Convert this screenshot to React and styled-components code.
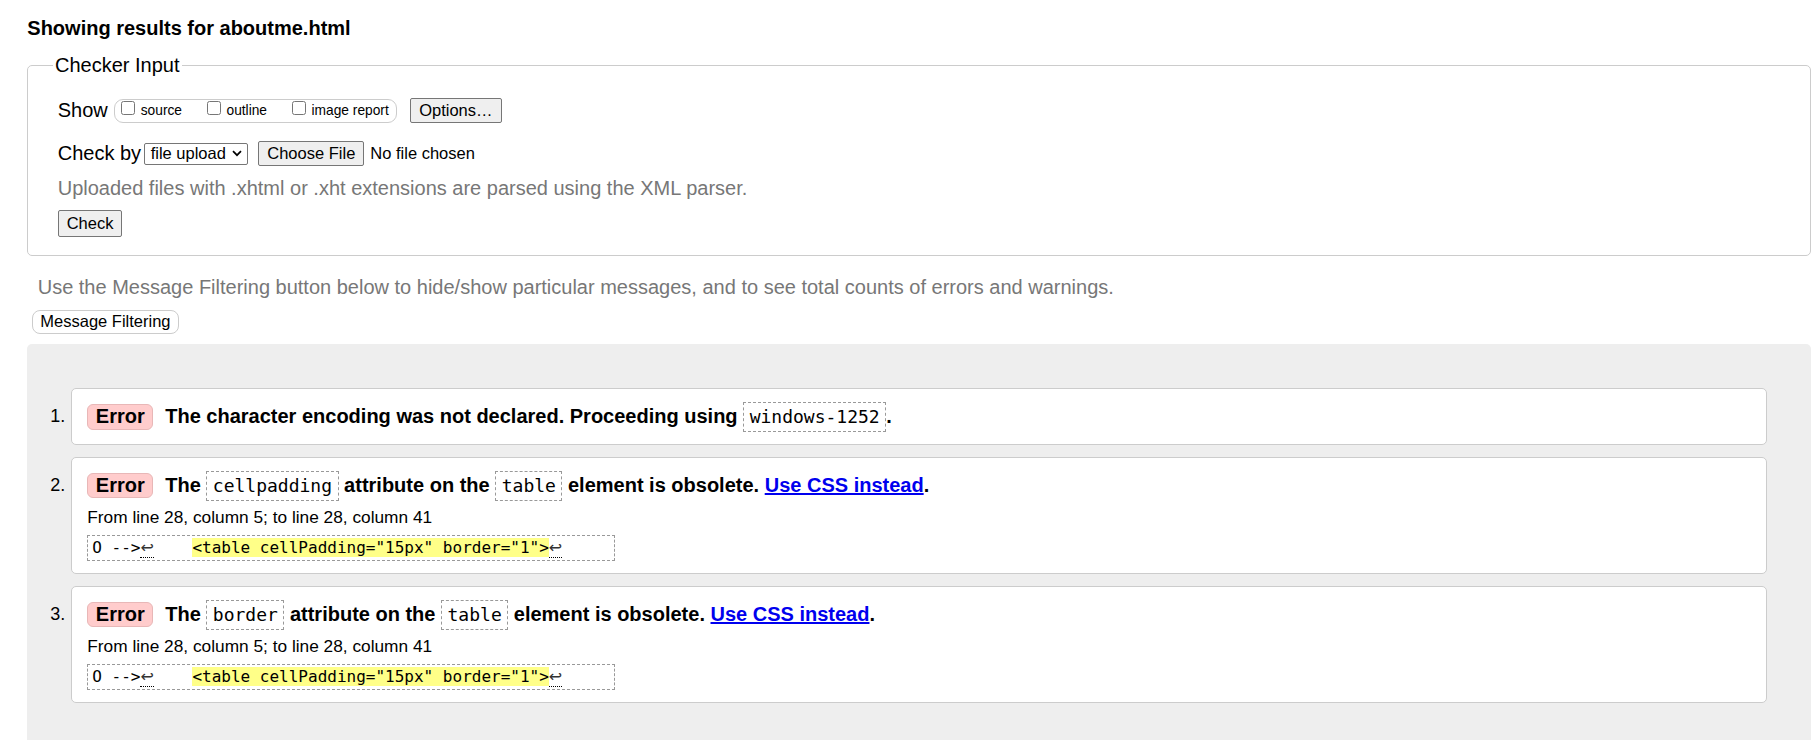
import React from "react";
import styled, { createGlobalStyle } from "styled-components";

const GlobalStyle = createGlobalStyle`
  html, body {
    margin: 0;
    padding: 0;
    background: #fff;
  }
  body {
    font-family: "Liberation Sans", Arial, sans-serif;
    color: #000;
  }
`;

const Page = styled.main`
  padding: 16.6px 8px 0 27.3px;
  font-size: 20px;
  line-height: 23px;
`;

const Title = styled.h2`
  margin: 0 0 14.6px;
  font-size: 20px;
  line-height: 23px;
  font-weight: bold;
`;

const Fieldset = styled.fieldset`
  margin: 0;
  padding: 21px 8px 18px 29.4px;
  border: 1px solid #ccc;
  border-radius: 5px;
  min-width: 0;
`;

const Legend = styled.legend`
  padding: 0 2px;
  margin-left: -4.7px;
  font-size: 20px;
  line-height: 23px;
`;

const Row = styled.div`
  display: flex;
  align-items: center;
  margin-top: ${(p) => p.$gap || 0}px;
`;

const Label = styled.span`
  font-size: 20px;
  line-height: 23px;
`;

const ShowBox = styled.div`
  display: flex;
  align-items: center;
  gap: 25px;
  box-sizing: border-box;
  height: 24px;
  margin-left: 6px;
  padding: 0 7px 0 6.5px;
  border: 1px solid #ccc;
  border-radius: 9px;
  font-size: 13.75px;
  line-height: 16px;
`;

const Option = styled.label`
  display: inline-flex;
  align-items: center;
  gap: 5.5px;
`;

const Checkbox = styled.input.attrs({ type: "checkbox" })`
  appearance: none;
  box-sizing: border-box;
  width: 14px;
  height: 14px;
  margin: 0 0 5px;
  border: 1px solid #767676;
  border-radius: 2.5px;
  background: #fff;
`;

const Button = styled.button`
  margin-left: ${(p) => p.$ml || 0}px;
  padding: ${(p) => (p.$tall ? "2.7px 8px" : "2px 8px")};
  font-family: "Liberation Sans", Arial, sans-serif;
  font-size: 16.5px;
  line-height: 19px;
  color: #000;
  background: #efefef;
  border: 1px solid #767676;
  border-radius: 2px;
`;

const SelectBox = styled.div`
  display: flex;
  align-items: center;
  gap: 5.8px;
  box-sizing: border-box;
  height: 21.7px;
  margin-left: 3.2px;
  padding: 0 5.6px 0 5.4px;
  border: 1px solid #767676;
  border-radius: 2px;
  background: #fff;
  font-size: 16.5px;
  line-height: 19px;
`;

const FileName = styled.span`
  margin-left: 6px;
  font-size: 16.5px;
  line-height: 19px;
`;

const Hint = styled.p`
  margin: ${(p) => p.$mt}px 0 0;
  padding-left: ${(p) => p.$indent || 0}px;
  font-size: 20px;
  line-height: 23px;
  color: #777;
`;

const FilterButton = styled.button`
  display: block;
  margin: 10.7px 0 0 5px;
  padding: 1.5px 7px;
  font-family: "Liberation Sans", Arial, sans-serif;
  font-size: 16.5px;
  line-height: 19px;
  color: #000;
  background: #fff;
  border: 1px solid #ccc;
  border-radius: 8px;
`;

const Panel = styled.section`
  margin-top: 10.7px;
  padding: 44px 44.4px 44px 0;
  background: #eee;
  border-radius: 5px;
`;

const List = styled.ol`
  display: grid;
  row-gap: 11.7px;
  margin: 0;
  padding: 0;
  list-style: none;
`;

const Item = styled.li`
  display: grid;
  grid-template-columns: 44px 1fr;
`;

const Marker = styled.span`
  padding: 13px 6px 0 0;
  text-align: right;
  font-size: 18px;
  line-height: 30px;
`;

const Box = styled.div`
  padding: 12px 15px;
  background: #fff;
  border: 1px solid #ccc;
  border-radius: 5px;
`;

const MessageLine = styled.p`
  margin: 0;
  font-size: 20px;
  font-weight: bold;
  line-height: 30px;
`;

const Badge = styled.span`
  display: inline-block;
  margin-right: 12px;
  padding: 0 7.5px;
  line-height: 23.4px;
  background: #fcc;
  border: 1px solid #e8b7b7;
  border-radius: 6px;
`;

const Code = styled.code`
  display: inline-block;
  padding: 3px 5.5px;
  font-family: "DejaVu Sans Mono", "Liberation Mono", monospace;
  font-size: 18px;
  font-weight: normal;
  line-height: 21.7px;
  border: 1px dashed #999;
`;

const Link = styled.a`
  color: #00e;
  text-decoration: underline;
`;

const Location = styled.p`
  margin: 4.5px 0 0;
  font-size: 17.3px;
  line-height: 24px;
`;

const Extract = styled.p`
  width: fit-content;
  margin: 5.5px 0 0;
  padding: 2px 4px;
  font-family: "DejaVu Sans Mono", "Liberation Mono", monospace;
  font-size: 16px;
  line-height: 20.7px;
  white-space: pre;
  border: 1px dashed #999;
`;

const Mark = styled.mark`
  background: #ff8;
  color: #000;
`;

const Lf = styled.span`
  font-family: "DejaVu Sans", sans-serif;
  border-bottom: 1px dotted #000;
  color: #333;
`;

function Chevron() {
  return (
    <svg width="10" height="7" viewBox="0 0 10 7">
      <path d="M1 1.2 L5 5.2 L9 1.2" fill="none" stroke="#000" strokeWidth="1.7" />
    </svg>
  );
}

function Message({ n, children, location }) {
  return (
    <Item>
      <Marker>{n}.</Marker>
      <Box>
        <MessageLine>
          <Badge>Error</Badge>
          {children}
        </MessageLine>
        {location && (
          <>
            <Location>From line 28, column 5; to line 28, column 41</Location>
            <Extract>
              O --&gt;<Lf>↩</Lf>{"    "}
              <Mark>{'<table cellPadding="15px" border="1">'}</Mark>
              <Lf>↩</Lf>{"     "}
            </Extract>
          </>
        )}
      </Box>
    </Item>
  );
}

export default function App() {
  return (
    <>
      <GlobalStyle />
      <Page>
        <Title>Showing results for aboutme.html</Title>
        <Fieldset>
          <Legend>Checker Input</Legend>
          <Row>
            <Label>Show</Label>
            <ShowBox>
              <Option>
                <Checkbox />
                source
              </Option>
              <Option>
                <Checkbox />
                outline
              </Option>
              <Option>
                <Checkbox />
                image report
              </Option>
            </ShowBox>
            <Button $ml={13.4}>Options…</Button>
          </Row>
          <Row $gap={18}>
            <Label>Check by</Label>
            <SelectBox>
              file upload
              <Chevron />
            </SelectBox>
            <Button $ml={10}>Choose File</Button>
            <FileName>No file chosen</FileName>
          </Row>
          <Hint $mt={10.4}>Uploaded files with .xhtml or .xht extensions are parsed using the XML parser.</Hint>
          <Row $gap={10.7}>
            <Button $tall>Check</Button>
          </Row>
        </Fieldset>
        <Hint $mt={20.4} $indent={10.4}>
          Use the Message Filtering button below to hide/show particular messages, and to see total counts of errors and warnings.
        </Hint>
        <FilterButton>Message Filtering</FilterButton>
        <Panel>
          <List>
            <Message n={1}>
              The character encoding was not declared. Proceeding using <Code>windows-1252</Code>.
            </Message>
            <Message n={2} location>
              The <Code>cellpadding</Code> attribute on the <Code>table</Code> element is obsolete.{" "}
              <Link href="#">Use CSS instead</Link>.
            </Message>
            <Message n={3} location>
              The <Code>border</Code> attribute on the <Code>table</Code> element is obsolete.{" "}
              <Link href="#">Use CSS instead</Link>.
            </Message>
          </List>
        </Panel>
      </Page>
    </>
  );
}
